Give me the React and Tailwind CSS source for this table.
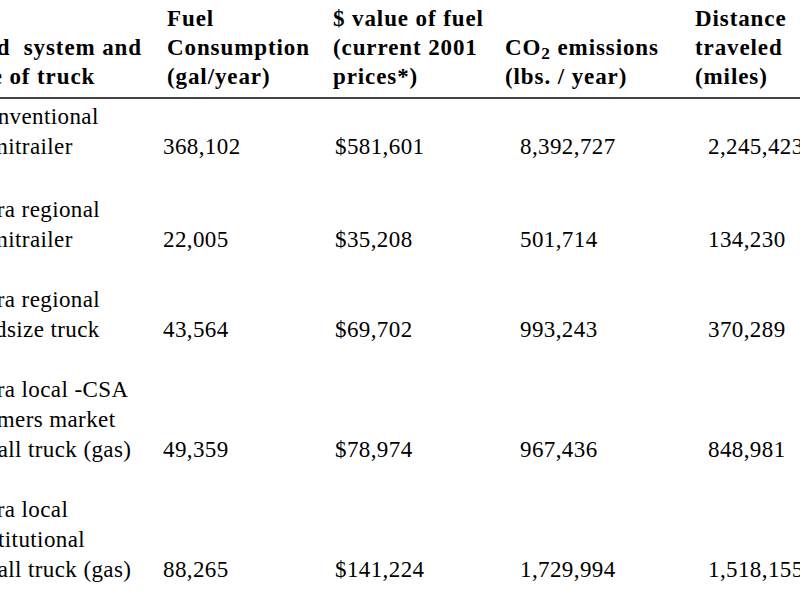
import React from "react";

const rows = [
  { name: ["Conventional", "semitrailer"], fuel: "368,102", value: "$581,601", co2: "8,392,727", miles: "2,245,423" },
  { name: ["Intra regional", "semitrailer"], fuel: "22,005", value: "$35,208", co2: "501,714", miles: "134,230" },
  { name: ["Intra regional", "midsize truck"], fuel: "43,564", value: "$69,702", co2: "993,243", miles: "370,289" },
  { name: ["Intra local -CSA", "farmers market", "small truck (gas)"], fuel: "49,359", value: "$78,974", co2: "967,436", miles: "848,981" },
  { name: ["Intra local", "institutional", "small truck (gas)"], fuel: "88,265", value: "$141,224", co2: "1,729,994", miles: "1,518,155" },
];

const cols = "grid grid-cols-[193px_170px_172px_190px_1fr] items-end";

export default function App() {
  return (
    <div className="w-[800px] h-[600px] overflow-hidden bg-white text-black font-['Liberation_Serif','Times_New_Roman',serif]">
      <div className="ml-[-30px] w-[900px]">
        {/* header */}
        <div className={`${cols} pt-[4px] font-bold text-[23px] leading-[29px] tracking-[0.9px] whitespace-nowrap`}>
          <div className="ml-[-13px] whitespace-pre">{"Food  system and\ntype of truck"}</div>
          <div className="pl-[4px]">
            Fuel<br />Consumption<br />(gal/year)
          </div>
          <div>
            $ value of fuel<br />(current 2001<br />prices*)
          </div>
          <div>
            CO<sub>2</sub> emissions<br />(lbs. / year)
          </div>
          <div>
            Distance<br />traveled<br />(miles)
          </div>
        </div>
        <div className="h-[2px] bg-[#444] mt-[6px] ml-[30px]" />

        {/* body */}
        <div className="mt-[3px] text-[23px] leading-[30px] tracking-[0.4px] whitespace-nowrap">
          {rows.map((r, i) => (
            <div key={i} className={`${cols} ${i === 0 ? "pb-[33px]" : "pb-[30px]"}`}>
              <div>
                {r.name.map((line, j) => (
                  <div key={j}>{line}</div>
                ))}
              </div>
              <div>{r.fuel}</div>
              <div className="pl-[2px]">{r.value}</div>
              <div className="pl-[15px]">{r.co2}</div>
              <div className="pl-[13px]">{r.miles}</div>
            </div>
          ))}
        </div>
      </div>
    </div>
  );
}
